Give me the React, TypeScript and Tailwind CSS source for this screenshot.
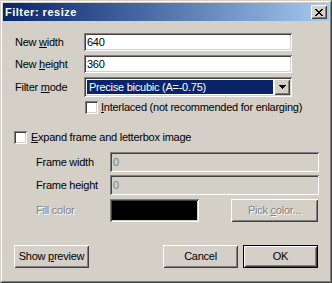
import React from "react";

const SUNKEN =
  "shadow-[inset_1px_1px_0_#808080,inset_-1px_-1px_0_#ffffff,inset_2px_2px_0_#404040,inset_-2px_-2px_0_#d4d0c8]";
const RAISED =
  "shadow-[inset_1px_1px_0_#ffffff,inset_-1px_-1px_0_#404040,inset_2px_2px_0_#d4d0c8,inset_-2px_-2px_0_#808080]";

function Check() {
  return <div className={`w-[13px] h-[13px] shrink-0 bg-white ${SUNKEN}`} />;
}

function CloseGlyph() {
  const rows = [
    "XX....XX",
    ".XX..XX.",
    "..XXXX..",
    "...XX...",
    "..XXXX..",
    ".XX..XX.",
    "XX....XX",
  ];
  return (
    <svg width="8" height="7" viewBox="0 0 8 7" shapeRendering="crispEdges">
      {rows.map((r, y) =>
        r.split("").map((c, x) =>
          c === "X" ? <rect key={`${x}-${y}`} x={x} y={y} width="1" height="1" fill="#000" /> : null
        )
      )}
    </svg>
  );
}

function DownArrow() {
  return (
    <svg width="7" height="4" viewBox="0 0 7 4" shapeRendering="crispEdges">
      <rect x="0" y="0" width="7" height="1" fill="#000" />
      <rect x="1" y="1" width="5" height="1" fill="#000" />
      <rect x="2" y="2" width="3" height="1" fill="#000" />
      <rect x="3" y="3" width="1" height="1" fill="#000" />
    </svg>
  );
}

export default function App() {
  return (
    <div className="w-[332px] h-[283px] bg-[#d4d0c8] border border-solid border-t-[#d4d0c8] border-l-[#d4d0c8] border-r-[#404040] border-b-[#404040] [font-family:'Liberation_Sans',Arial,sans-serif] text-[11px] tracking-[-0.25px] text-black leading-none select-none">
      <div className="h-full border border-solid border-t-white border-l-white border-r-[#808080] border-b-[#808080] p-px flex flex-col">
        {/* Title bar */}
        <div className="h-[18px] shrink-0 flex items-center justify-between bg-linear-to-r from-[#0a246a] to-[#a6caf0] pl-[2px] pr-[2px]">
          <span className="text-white font-bold tracking-[0.5px]">Filter: resize</span>
          <div className={`w-[16px] h-[14px] bg-[#d4d0c8] flex items-center justify-center ${RAISED}`}>
            <CloseGlyph />
          </div>
        </div>

        {/* Client */}
        <div className="flex flex-col">
          <div className="mt-[12px] h-[18px] flex items-center pl-[12px]">
            <div className="w-[69px]">
              New <span className="underline">w</span>idth
            </div>
            <div className={`w-[208px] h-[18px] bg-white flex items-center pl-[3px] ${SUNKEN}`}>640</div>
          </div>

          <div className="mt-[4px] h-[18px] flex items-center pl-[12px]">
            <div className="w-[69px]">
              New <span className="underline">h</span>eight
            </div>
            <div className={`w-[208px] h-[18px] bg-white flex items-center pl-[3px] ${SUNKEN}`}>360</div>
          </div>

          <div className="mt-[4px] h-[20px] flex items-center pl-[12px]">
            <div className="w-[69px]">
              Filter <span className="underline">m</span>ode
            </div>
            <div className={`w-[208px] h-[20px] bg-white flex items-stretch p-[2px] ${SUNKEN}`}>
              <div className="flex-1 p-px">
                <div className="h-full bg-[#0a246a] text-white flex items-center pl-[2px]">
                  Precise bicubic (A=-0.75)
                </div>
              </div>
              <div className={`w-[16px] bg-[#d4d0c8] flex items-center justify-center ${RAISED}`}>
                <DownArrow />
              </div>
            </div>
          </div>

          <div className="mt-[4px] h-[13px] flex items-center pl-[82px] gap-[3px]">
            <Check />
            <span>
              <span className="underline">I</span>nterlaced (not recommended for enlarging)
            </span>
          </div>

          <div className="mt-[17px] h-[13px] flex items-center pl-[11px] gap-[4px]">
            <Check />
            <span>
              <span className="underline">E</span>xpand frame and letterbox image
            </span>
          </div>

          <div className="mt-[8px] h-[20px] flex items-center pl-[33px]">
            <div className="w-[74px]">Frame width</div>
            <div className={`w-[209px] h-[20px] bg-[#d4d0c8] text-[#808080] flex items-center pl-[3px] ${SUNKEN}`}>0</div>
          </div>

          <div className="mt-[3px] h-[20px] flex items-center pl-[33px]">
            <div className="w-[74px]">Frame height</div>
            <div className={`w-[209px] h-[20px] bg-[#d4d0c8] text-[#808080] flex items-center pl-[3px] ${SUNKEN}`}>0</div>
          </div>

          <div className="mt-[4px] h-[23px] flex items-center pl-[33px]">
            <div className="w-[74px] text-[#808080] [text-shadow:1px_1px_0_#ffffff]">Fill color</div>
            <div className={`w-[89px] h-[23px] bg-black p-[2px] ${SUNKEN}`}>
              <div className="w-full h-full bg-black" />
            </div>
            <div className={`ml-[32px] w-[87px] h-[23px] bg-[#d4d0c8] flex items-center justify-center text-[#808080] [text-shadow:1px_1px_0_#ffffff] ${RAISED}`}>
              <span>
                Pick <span className="underline">c</span>olor...
              </span>
            </div>
          </div>

          <div className="mt-[23px] h-[23px] flex items-center pl-[11px]">
            <div className={`w-[75px] h-[23px] bg-[#d4d0c8] flex items-center justify-center ${RAISED}`}>
              <span>
                Show <span className="underline">p</span>review
              </span>
            </div>
            <div className={`ml-[74px] w-[75px] h-[23px] bg-[#d4d0c8] flex items-center justify-center ${RAISED}`}>
              Cancel
            </div>
            <div className="ml-[5px] w-[75px] h-[23px] border border-solid border-black">
              <div className={`w-full h-full bg-[#d4d0c8] flex items-center justify-center ${RAISED}`}>OK</div>
            </div>
          </div>
        </div>
      </div>
    </div>
  );
}
